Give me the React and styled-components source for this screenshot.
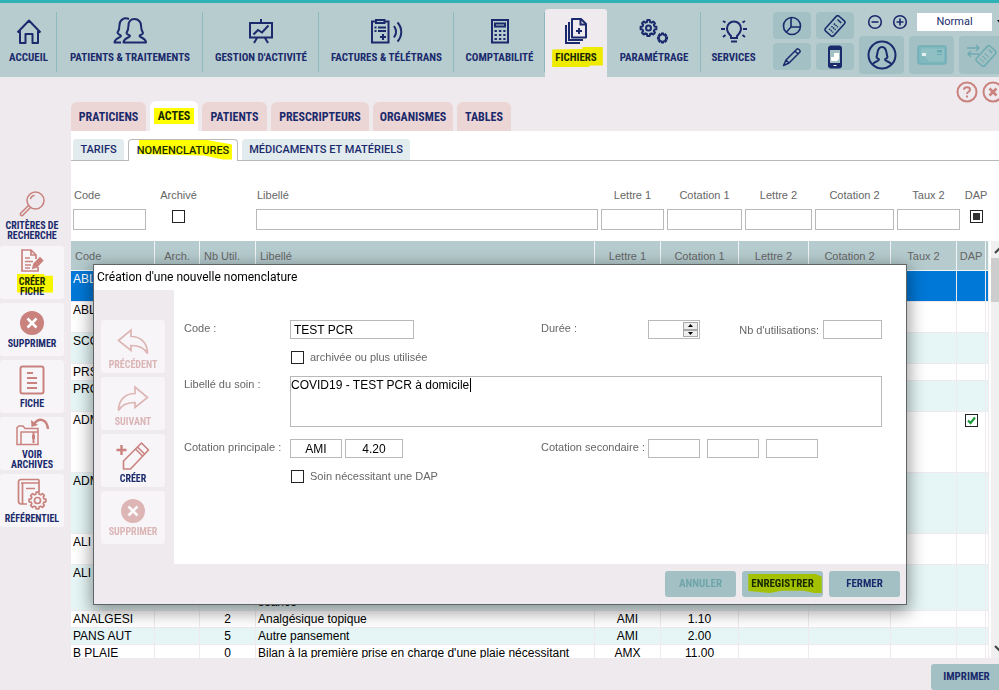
import React, { useState } from "react";
import styled, { createGlobalStyle } from "styled-components";

const narrow = `"Roboto Condensed", "Liberation Sans Narrow", Roboto, sans-serif`;
const arial = `"Liberation Sans", Arial, sans-serif`;
const navy = "#1a2a6c";
const coral = "#c9827e";

const GlobalStyle = createGlobalStyle`
  * {
    box-sizing: border-box;
  }
  body {
    margin: 0;
    overflow: hidden;
    background: #eeeaed;
    font-family: ${arial};
    font-size: 12px;
    color: #000;
  }
  button, input, select, textarea {
    font-family: inherit;
    font-size: inherit;
  }
`;

const Page = styled.div`
  height: 100vh;
  display: flex;
  flex-direction: column;
`;

const Header = styled.header`
  display: flex;
  height: 77px;
  flex-shrink: 0;
  border-top: 3px solid #2fb1b8;
  background: #b7cccf;
  overflow: hidden;
`;

const NavItem = styled.a`
  position: relative;
  flex: 0 0 ${(p) => p.$width}px;
  display: flex;
  flex-direction: column;
  align-items: center;
  gap: 6px;
  margin-top: ${(p) => (p.$active ? "6px" : "9px")};
  padding-top: ${(p) => (p.$active ? "8px" : "5px")};
  border-radius: 3px 3px 0 0;
  background: ${(p) => (p.$active ? "#eeeaed" : "none")};
  color: ${navy};
  font: 700 11px/14px ${narrow};
  text-decoration: none;
  white-space: nowrap;

  svg {
    display: block;
    height: 28px;
  }

  &::after {
    content: "";
    display: ${(p) => (p.$line ? "block" : "none")};
    position: absolute;
    top: 0;
    right: 0;
    width: 1px;
    height: 60px;
    background: #8cbabe;
  }
`;

const Marker = styled.span`
  position: relative;

  &::before {
    content: "";
    position: absolute;
    inset: ${(p) => p.$inset || "-2px -5px"};
    background: #ffff00;
    mix-blend-mode: multiply;
    clip-path: ${(p) => p.$shape || "none"};
    z-index: 1;
    pointer-events: none;
  }
`;

const Tools = styled.div`
  display: flex;
  gap: 5px;
  margin-left: 7px;
  padding-top: 9px;
  flex: 1 0 auto;
`;

const ToolGrid = styled.div`
  display: grid;
  grid-template-columns: 38px 38px;
  grid-auto-rows: 27px;
  gap: 4px 5px;
`;

const ToolButton = styled.button`
  display: flex;
  align-items: center;
  justify-content: center;
  width: ${(p) => (p.$large ? "45px" : "38px")};
  height: ${(p) => (p.$large ? "38px" : "27px")};
  flex-shrink: 0;
  padding: 0;
  border: 0;
  border-radius: 4px;
  background: #a3c1c4;
`;

const ToolSide = styled.div`
  display: flex;
  flex-direction: column;
  gap: 5px;
`;

const ZoomRow = styled.div`
  display: flex;
  align-items: center;
  gap: 9px;
  height: 19px;
  padding-left: 8px;
`;

const ZoomButton = styled.button`
  display: flex;
  width: 16px;
  height: 16px;
  padding: 0;
  border: 0;
  background: none;
`;

const SelectWrap = styled.label`
  display: flex;
  align-items: center;
  gap: 5px;
`;

const ZoomSelect = styled.select`
  appearance: none;
  width: 75px;
  height: 18px;
  padding: 0;
  border: 0;
  border-radius: 0;
  background: #fff;
  color: ${navy};
  font-family: Roboto, sans-serif;
  font-size: 11px;
  text-align: center;
  text-align-last: center;
`;

const ToolRow = styled.div`
  display: flex;
  gap: 5px;
`;

const Body = styled.div`
  display: flex;
  flex: 1;
  min-height: 0;
`;

const Sidebar = styled.nav`
  display: flex;
  flex-direction: column;
  gap: 4px;
  width: 71px;
  flex-shrink: 0;
  padding-top: 112px;
`;

const SideButton = styled.button`
  display: flex;
  flex-direction: column;
  align-items: center;
  justify-content: center;
  gap: 4px;
  width: 64px;
  height: 53px;
  padding: 0;
  border: 0;
  border-radius: 3px;
  background: ${(p) => (p.$flat ? "none" : "#f7f5f8")};
  color: ${(p) => (p.disabled ? "#dbb5b6" : navy)};
  font: 700 10px/10px ${narrow};
  white-space: nowrap;

  svg {
    display: block;
    flex-shrink: 0;
    opacity: ${(p) => (p.disabled ? 0.55 : 1)};
  }
`;

const SideLabel = styled.span`
  display: flex;
  flex-direction: column;
  align-items: center;
`;

const Main = styled.main`
  display: flex;
  flex-direction: column;
  flex: 1;
  min-width: 0;
`;

const HelpRow = styled.div`
  display: flex;
  justify-content: flex-end;
  gap: 4px;
  height: 24px;
  padding-top: 4px;
  margin-right: -5px;
`;

const RoundButton = styled.button`
  width: 22px;
  height: 22px;
  padding: 0;
  border: 0;
  background: none;

  svg {
    display: block;
  }
`;

const Tabs = styled.div`
  display: flex;
  align-items: flex-end;
  gap: 4px;
  height: 30px;
`;

const Tab = styled.button`
  width: ${(p) => p.$width}px;
  height: ${(p) => (p.$active ? "30px" : "29px")};
  padding: 0;
  border: 0;
  border-radius: 6px 6px 0 0;
  background: ${(p) => (p.$active ? "#fff" : "#ecd5d5")};
  color: ${navy};
  font: 700 12px/16px ${narrow};
`;

const Panel = styled.section`
  display: flex;
  flex-direction: column;
  flex: 1;
  min-height: 0;
  background: #fff;
`;

const SubTabs = styled.div`
  display: flex;
  align-items: flex-end;
  gap: 4px;
  height: 30px;
  padding-left: 2px;
  border-bottom: 1px solid #b9b9b9;
`;

const SubTab = styled.button`
  width: ${(p) => p.$width}px;
  height: ${(p) => (p.$active ? "22px" : "21px")};
  margin-bottom: ${(p) => (p.$active ? "-1px" : "0")};
  padding: 0;
  border: ${(p) => (p.$active ? "1px solid #b9b9b9" : "0")};
  border-bottom: 0;
  border-radius: 4px 4px 0 0;
  background: ${(p) => (p.$active ? "#fff" : "#e2ebee")};
  color: ${navy};
  font: 500 11px/14px Roboto, sans-serif;
  white-space: nowrap;
`;

const Filters = styled.form`
  display: grid;
  grid-template-columns: 73px 59px 42px 1fr 63px 75px 67px 79px 63px 26px;
  gap: 3px;
  padding: 28px 10px 11px 2px;
  color: #666;
  font-size: 11px;
`;

const Filter = styled.label`
  display: flex;
  flex-direction: column;
  gap: 7px;
  align-items: ${(p) => (p.$left ? "stretch" : "center")};
  grid-column: ${(p) => p.$column || "auto"};
  line-height: 13px;

  span {
    padding-left: ${(p) => (p.$left ? "1px" : "0")};
  }
`;

const Field = styled.input`
  width: ${(p) => (p.$width ? p.$width + "px" : "100%")};
  height: ${(p) => (p.$tall ? "21px" : "19px")};
  padding: 0 3px;
  border: 1px solid #b9b9b9;
  border-radius: 0;
  background: #fff;
  color: #000;
  font-size: 12px;
  text-align: ${(p) => p.$align || "left"};
  outline: none;
`;

const Check = styled.input.attrs({ type: "checkbox" })`
  appearance: none;
  width: 13px;
  height: 13px;
  flex-shrink: 0;
  margin: ${(p) => (p.$filter ? "1px 0 0" : "0")};
  border: 1px solid #222;
  background: ${(p) => (p.$mixed ? "#333" : "#fff")};
  background-clip: content-box;
  padding: 2px;
`;

const TableArea = styled.div`
  display: flex;
  gap: 2px;
  flex: 1;
  min-height: 0;
  overflow: hidden;
`;

const TableClip = styled.div`
  flex: 1;
  min-width: 0;
  overflow: hidden;
`;

const Table = styled.table`
  width: 100%;
  table-layout: fixed;
  border-collapse: separate;
  border-spacing: 0;
`;

const Th = styled.th`
  height: 30px;
  padding: 0 ${(p) => (p.$left ? "4px" : "0")};
  border-right: 1px solid #f2f5f5;
  border-bottom: 1px solid #f2f5f5;
  background: #b5cbce;
  color: #666;
  font-size: 11px;
  font-weight: 400;
  text-align: ${(p) => (p.$left ? "left" : "center")};
  white-space: nowrap;
`;

const Row = styled.tr`
  height: ${(p) => p.$height}px;
  background: ${(p) => p.$color};
  color: ${(p) => (p.$selected ? "#fff" : "#000")};
`;

const Td = styled.td`
  padding: 1px 1px 0 ${(p) => (p.$center ? "1px" : "2px")};
  border-right: 1px solid #eeeaed;
  border-bottom: 1px solid #eeeaed;
  font-size: 12px;
  line-height: 15px;
  text-align: ${(p) => (p.$center ? "center" : "left")};
  vertical-align: ${(p) => (p.$bottom ? "bottom" : "top")};
  white-space: nowrap;

  svg {
    display: block;
    margin: 1px auto 0;
  }
`;

const Scrollbar = styled.div`
  display: flex;
  flex-direction: column;
  justify-content: space-between;
  width: 8px;
  background: #f0f0f0;
`;

const Thumb = styled.div`
  height: 44px;
  margin-bottom: auto;
  background: #cdcdcd;
`;

const Footer = styled.footer`
  display: flex;
  justify-content: flex-end;
  height: 32px;
  padding-top: 6px;
  margin-right: -3px;
`;

const ActionButton = styled.button`
  width: ${(p) => p.$width || 71}px;
  height: 26px;
  padding: 0;
  border: 0;
  border-radius: 3px;
  background: #a3c1c4;
  color: ${(p) => (p.disabled ? "#6fa5aa" : navy)};
  font: 700 11px/14px ${narrow};
`;

const Dialog = styled.div`
  position: fixed;
  top: 264px;
  left: 93px;
  right: 92px;
  display: flex;
  flex-direction: column;
  border: 1px solid #5f6567;
  background: #eeeaed;
  box-shadow: 0 5px 16px 2px rgba(0, 0, 0, 0.4);
`;

const DialogTitle = styled.h1`
  margin: 0;
  padding: 0 3px;
  background: #fff;
  font: 400 12px/25px Roboto, sans-serif;
`;

const DialogBody = styled.div`
  display: flex;
`;

const DialogSide = styled.div`
  display: flex;
  flex-direction: column;
  gap: 4px;
  width: 80px;
  padding: 30px 0 20px 7px;
`;

const DialogForm = styled.form`
  display: grid;
  grid-template-columns: 106px 251px 107px 1fr;
  align-content: start;
  row-gap: 12px;
  flex: 1;
  padding: 30px 24px 0 10px;
  background: #fff;
  color: #666;
  font-size: 11px;
`;

const FormLabel = styled.label`
  padding-top: 2px;
  line-height: 13px;
  white-space: nowrap;
`;

const Cells = styled.div`
  display: flex;
  align-items: center;
  gap: ${(p) => p.$gap || 3}px;
  justify-content: ${(p) => p.$justify || "flex-start"};
`;

const CheckLine = styled.label`
  display: flex;
  align-items: center;
  gap: 6px;
  grid-column: 2 / -1;
  padding-left: 1px;
  line-height: 13px;
`;

const TextBox = styled.div`
  position: relative;
  grid-column: 2 / -1;
  height: 51px;
`;

const TextArea = styled.textarea`
  display: block;
  width: 100%;
  height: 100%;
  padding: 1px 0;
  border: 1px solid #b9b9b9;
  border-radius: 0;
  color: #000;
  font-size: 12px;
  line-height: 15px;
  resize: none;
  outline: none;
`;

const Caret = styled.i`
  position: absolute;
  top: 2px;
  left: 180px;
  width: 1px;
  height: 14px;
  background: #000;
`;

const Spinner = styled.div`
  display: flex;
  width: 52px;
  height: 19px;
  padding: 1px;
  border: 1px solid #b9b9b9;

  input {
    flex: 1;
    min-width: 0;
    height: auto;
    border: 0;
  }
`;

const SpinButtons = styled.div`
  display: flex;
  flex-direction: column;
  width: 15px;
`;

const SpinButton = styled.button`
  display: flex;
  align-items: center;
  justify-content: center;
  flex: 1;
  min-height: 0;
  padding: 0;
  border: 1px solid #a9a9a9;
  background: #eee;
`;

const DialogFooter = styled.div`
  display: flex;
  justify-content: flex-end;
  gap: 6px;
  padding: 7px 6px;
`;

const Svg = ({ w, h, color = navy, stroke = 2, children }) => (
  <svg width={w} height={h} viewBox={`0 0 ${w} ${h}`} fill="none" stroke={color} strokeWidth={stroke} aria-hidden="true">
    {children}
  </svg>
);

const gearPath = (cx, cy, outer, inner, teeth) => {
  const points = [];
  const step = (Math.PI * 2) / teeth;
  for (let i = 0; i < teeth; i++) {
    [[-0.32, inner], [-0.2, outer], [0.2, outer], [0.32, inner]].forEach(([offset, r]) => {
      const a = (i + offset) * step;
      points.push(`${(cx + r * Math.sin(a)).toFixed(2)} ${(cy - r * Math.cos(a)).toFixed(2)}`);
    });
  }
  return `M${points.join("L")}Z`;
};

const HomeIcon = () => (
  <Svg w={26} h={28}>
    <path d="M1.5 15.5L13 3.5L24.5 15.5M4 14V26H9.5V17H16.5V26H22V14" strokeLinejoin="round" />
  </Svg>
);

const PatientsIcon = () => (
  <Svg w={34} h={28}>
    <path
      strokeLinejoin="round"
      d="M16 2C11 0 6.5 3 6.5 8C6.5 12 6 13.5 4.5 15.5C4.5 17.5 8 17.5 8 19C8 20.5 1.5 21.5 1.5 25.5H8"
    />
    <path
      strokeLinejoin="round"
      d="M21.5 2C17.5 2 15.5 5 15.5 8.5C15.5 12 15 13.5 13.5 16C13.5 18 17 17.5 17 19C17 20.5 10.5 21 10.5 25.5H33C33 21 26.5 20.5 26.5 19C26.5 17.5 30 18 30 16C28.5 13.5 28 12 28 8.5C28 5 25.5 2 21.5 2Z"
    />
  </Svg>
);

const ActivityIcon = () => (
  <Svg w={26} h={28}>
    <path d="M13 2V6M2 6H24V20.5H2ZM9 21L6 26M17 21L20 26" />
    <path d="M5.5 17.5L10 13L14 15.5L20.5 8.5" />
  </Svg>
);

const InvoiceIcon = () => (
  <Svg w={34} h={28}>
    <path d="M6 4.5H2V25.5H18.5V4.5H14.5M6 3H14.5V6H6Z" />
    <path d="M4.5 10.5H6.5M8 10.5H16M4.5 14H6.5M8 14H16M10 20H16M13 17V23" />
    <path d="M24 9C26.5 12.5 26.5 17 24 20.5M27.5 5.5C32.5 11 32.5 19 27.5 24.5" />
  </Svg>
);

const CalculatorIcon = () => (
  <Svg w={20} h={28}>
    <path d="M2 3H18V25.5H2ZM5 6.5H15V9.5H5Z" />
    <path d="M4.5 14H15.5M4.5 18H15.5M4.5 22H15.5" strokeDasharray="2.4 2" />
  </Svg>
);

const FilesIcon = () => (
  <Svg w={24} h={28}>
    <path d="M8 2H17L22 7V20.5H8Z" strokeLinejoin="round" />
    <path d="M16.5 2V7.5H22M12 14H18M15 11V17M5 5V23H19M2 8V26H16" />
  </Svg>
);

const SettingsIcon = () => (
  <Svg w={30} h={28}>
    <path d={gearPath(9.5, 11, 8, 6.2, 8)} strokeLinejoin="round" />
    <circle cx="9.5" cy="11" r="2.5" />
    <path d={gearPath(23.5, 21, 4.8, 3.4, 8)} strokeWidth="1.6" />
  </Svg>
);

const BulbIcon = () => (
  <Svg w={26} h={28}>
    <path d="M10 21V19C8 17 6 15 6 11.5A7 7 0 0 1 20 11.5C20 15 18 17 16 19V21ZM10 24.5H16" />
    <path d="M2 4L4.500 5.500M24 4L21.500 5.500M0 12H4M26 12H22M2 20L4.500 18M24 20L21.500 18" />
  </Svg>
);

const PieIcon = () => (
  <Svg w={20} h={20} stroke={1.6}>
    <circle cx="10" cy="10" r="8.5" />
    <path d="M9 1.5V11H18.5M9 11L4 16.5" />
  </Svg>
);

const CardReader = ({ color }) => (
  <g transform="rotate(42 11 11)" stroke={color}>
    <rect x="5.5" y="1" width="11" height="20" rx="2" />
    <path d="M8.5 4.5H13.5" />
    <path d="M8.5 10H14M8.5 13.5H14M8.500 17H14" strokeDasharray="1.5 0.7" />
  </g>
);

const ReaderIcon = () => (
  <Svg w={22} h={22} stroke={1.5}>
    <CardReader color={navy} />
  </Svg>
);

const PencilIcon = () => (
  <Svg w={20} h={20} stroke={1.5}>
    <path d="M1.5 18.5L4 13L15 2C16 1 19 4 18 5L7 16ZM4 13L7 16M13 4L16 7" strokeLinejoin="round" />
  </Svg>
);

const PhoneIcon = () => (
  <Svg w={16} h={24} stroke={1}>
    <rect x="1.5" y="1" width="13" height="22" rx="2" fill={navy} />
    <path d="M3 5H13V18H3Z" fill="#a3c1c4" stroke="none" />
    <path d="M4 12H7V8H12V14L10 16H4Z" fill="#fff" stroke="none" />
    <path d="M6.5 20.5H9.5" stroke="#fff" />
  </Svg>
);

const ZoomIcon = ({ plus }) => (
  <Svg w={16} h={16} stroke={1.6}>
    <circle cx="8" cy="8" r="6.3" />
    <path d={plus ? "M4.5 8H11.5M8 4.5V11.5" : "M4.5 8H11.5"} />
  </Svg>
);

const UserIcon = () => (
  <Svg w={30} h={30}>
    <circle cx="15" cy="15" r="13.5" />
    <path
      strokeLinejoin="round"
      d="M6 24C7 21.5 12 21.5 12 19.5C12 18.5 9.5 18.5 9.5 17C11 14 9.5 7 15 7C20.5 7 19 14 20.5 17C20.5 18.5 18 18.5 18 19.5C18 21.5 23 21.5 24 24"
    />
  </Svg>
);

const VitaleIcon = () => (
  <Svg w={30} h={20} stroke={1.6} color="#72b0b7">
    <rect x="1" y="1" width="28" height="18" rx="2" fill="#7fb8be" />
    <path d="M4 3.5H27V16.5H12L8 12L4 11Z" fill="#90bfc4" stroke="none" />
    <path d="M20 5H25V7.500H20ZM20 9H25V10H20Z" fill="#6aabb3" stroke="none" />
    <path d="M5 8H9V11H5Z" fill="#e4f0f1" stroke="none" />
  </Svg>
);

const TransferIcon = () => (
  <Svg w={32} h={24} stroke={1.5} color="#6fabb2">
    <path d="M1 5H13M10 2L13 5L10 8M13 11H2M5 8L2 11L5 14" />
    <g transform="translate(9 2)">
      <CardReader color="#6fabb2" />
    </g>
  </Svg>
);

const HelpIcon = () => (
  <Svg w={22} h={22} color={coral}>
    <circle cx="11" cy="11" r="9.5" />
    <path d="M8 8.7C8 5.5 14 5.5 14 8.7C14 11 11 10.5 11 13M11 14.5V16.5" />
  </Svg>
);

const CloseIcon = () => (
  <Svg w={22} h={22} color={coral}>
    <circle cx="11" cy="11" r="9.5" />
    <path d="M7.5 7.5L14.5 14.5M14.5 7.5L7.5 14.5" strokeWidth="2.6" />
  </Svg>
);

const SearchIcon = () => (
  <Svg w={26} h={26} color={coral} stroke={1.5}>
    <circle cx="16.5" cy="9.5" r="8.5" />
    <path d="M10 14L1.500 22.500C1 24 2 25 3.500 24.500L12 16M11.500 8C12 6 13.500 4.500 15.500 4.500" />
  </Svg>
);

const CreateIcon = () => (
  <Svg w={24} h={24} color={coral} stroke={1.7}>
    <path d="M16 10V6L11 1H2V22H18V18M11 1V6H16M5 9H10M5 12.5H13M5 16H11M5 19H10" />
    <path d="M13 19L14 15L20 9L22.5 11.5L16.5 18Z" fill={coral} />
  </Svg>
);

const DeleteIcon = () => (
  <Svg w={24} h={24} color="#fff" stroke={2.6}>
    <circle cx="12" cy="12" r="12" fill={coral} stroke="none" />
    <path d="M7.5 7.5L16.5 16.5M16.5 7.5L7.5 16.5" />
  </Svg>
);

const SheetIcon = () => (
  <Svg w={26} h={30} color={coral}>
    <rect x="1.5" y="1.5" width="23" height="27" rx="2" />
    <path d="M8 8H14M8 13H18M8 18H18M8 23H18" />
  </Svg>
);

const ArchiveIcon = () => (
  <Svg w={36} h={28} color={coral} stroke={1.5}>
    <path d="M3 26.5V9.5L5 8H9L11 10.5H24V26.5ZM7 26V14H24" />
    <path d="M19.5 14V17M18 18H21M18 20H21M19.5 21V25" strokeWidth="2" />
    <path d="M34 11C33 1 25 -1 20 6" strokeWidth="2.5" />
    <path d="M17 2L17.5 9L24 7Z" fill={coral} stroke="none" />
  </Svg>
);

const ReferenceIcon = () => (
  <Svg w={30} h={32} color={coral} stroke={1.7}>
    <path d="M10 26H4C2 26 1.5 24.5 1.5 23V4C1.5 2 3 1.5 4 1.5H22M4 5H22V14M22 1.5V5M5.5 5V26M9 10.5H18" />
    <path d={gearPath(20.5, 22.5, 8.5, 6.6, 8)} strokeLinejoin="round" />
    <circle cx="20.5" cy="22.5" r="3" />
  </Svg>
);

const ArrowIcon = ({ forward }) => (
  <Svg w={32} h={32} color={coral} stroke={1.7}>
    <g transform={forward ? "translate(32 4) scale(-1 1)" : "translate(0 4)"}>
      <path d="M1.5 12.5L14 2V8.5C24 8.5 30.5 15 30.5 25.5C27 19 21 17.5 14 17.5V22.5Z" />
    </g>
  </Svg>
);

const AddPencilIcon = () => (
  <Svg w={36} h={32} color={coral} stroke={1.6}>
    <g transform="translate(0 3)">
      <path d="M1.5 9H11.5M6.5 4V14" strokeWidth="2.4" />
      <path d="M8.5 28V20L26.5 2L33.5 9L15.5 28ZM20.5 8L27.5 15M22.5 6L29.5 13" strokeLinejoin="round" />
    </g>
  </Svg>
);

const TickIcon = () => (
  <svg width="13" height="13" viewBox="0 0 13 13" fill="none" role="img" aria-label="DAP">
    <rect x="0.5" y="0.5" width="12" height="12" fill="#fff" stroke="#222" />
    <path d="M3 6.500L5.500 9L10 3.500" stroke="#1d9a3c" strokeWidth="2.2" />
  </svg>
);

const Triangle = ({ down }) => (
  <svg width="5" height="3" viewBox="0 0 5 3" aria-hidden="true">
    <path d={down ? "M0 0H5L2.5 3Z" : "M0 3H5L2.5 0Z"} />
  </svg>
);

const Chevron = ({ down }) => (
  <svg width="8" height="17" viewBox="0 0 8 17" fill="none" stroke="#444" strokeWidth="2" aria-hidden="true">
    <path d={down ? "M4 5L9 10" : "M4 12L9 7"} />
  </svg>
);

const navItems = [
  { label: "ACCUEIL", icon: <HomeIcon />, width: 57, line: true },
  { label: "PATIENTS & TRAITEMENTS", icon: <PatientsIcon />, width: 146, line: true },
  { label: "GESTION D'ACTIVITÉ", icon: <ActivityIcon />, width: 116, line: true },
  { label: "FACTURES & TÉLÉTRANS", icon: <InvoiceIcon />, width: 135, line: true },
  { label: "COMPTABILITÉ", icon: <CalculatorIcon />, width: 91, line: true },
  { label: "FICHIERS", icon: <FilesIcon />, width: 62, active: true },
  { label: "PARAMÉTRAGE", icon: <SettingsIcon />, width: 94, line: true },
  { label: "SERVICES", icon: <BulbIcon />, width: 65 },
];

const tabs = [
  ["PRATICIENS", 75],
  ["ACTES", 48],
  ["PATIENTS", 65],
  ["PRESCRIPTEURS", 98],
  ["ORGANISMES", 80],
  ["TABLES", 54],
];

const sideItems = [
  { lines: ["CRITÈRES DE", "RECHERCHE"], icon: <SearchIcon />, flat: true },
  { lines: ["CRÉER", "FICHE"], icon: <CreateIcon />, marked: true },
  { lines: ["SUPPRIMER"], icon: <DeleteIcon /> },
  { lines: ["FICHE"], icon: <SheetIcon /> },
  { lines: ["VOIR", "ARCHIVES"], icon: <ArchiveIcon /> },
  { lines: ["RÉFÉRENTIEL"], icon: <ReferenceIcon /> },
];

const columns = [
  ["Code", 84],
  ["Arch.", 45],
  ["Nb Util.", 56],
  ["Libellé", null],
  ["Lettre 1", 66],
  ["Cotation 1", 78],
  ["Lettre 2", 70],
  ["Cotation 2", 82],
  ["Taux 2", 66],
  ["DAP", 29],
  ["", 3],
];

const rows = [
  { code: "ABL", height: 31, selected: true },
  { code: "ABL", height: 31 },
  { code: "SCO", height: 31, tinted: true },
  { code: "PRS", height: 17 },
  { code: "PRO", height: 31, tinted: true },
  { code: "ADM", height: 61, dap: true },
  { code: "ADM", height: 61, tinted: true },
  { code: "ALI", height: 31 },
  { code: "ALI", height: 46, tinted: true, label: "séance", bottom: true },
  { code: "ANALGESI", height: 17, count: 2, label: "Analgésique topique", letter: "AMI", rate: "1.10" },
  { code: "PANS AUT", height: 17, tinted: true, count: 5, label: "Autre pansement", letter: "AMI", rate: "2.00" },
  {
    code: "B PLAIE",
    height: 17,
    count: 0,
    label: "Bilan à la première prise en charge d'une plaie nécessitant",
    letter: "AMX",
    rate: "11.00",
  },
];

const rowColor = (row) => {
  if (row.selected) return "#0078d7";
  return row.tinted ? "#e6f6f6" : "#fff";
};

function TopBar() {
  return (
    <Header>
      {navItems.map((item) => (
        <NavItem key={item.label} href="#" $width={item.width} $active={item.active} $line={item.line}>
          {item.icon}
          {item.active ? (
            <Marker $inset="-4px -6px -2px -3px" $shape="polygon(0 12%, 60% 10%, 60% 0, 100% 0, 100% 92%, 75% 92%, 72% 100%, 0 100%)">
              {item.label}
            </Marker>
          ) : (
            <span>{item.label}</span>
          )}
        </NavItem>
      ))}
      <Tools>
        <ToolGrid>
          <ToolButton aria-label="Statistiques"><PieIcon /></ToolButton>
          <ToolButton aria-label="Lecteur"><ReaderIcon /></ToolButton>
          <ToolButton aria-label="Modifier"><PencilIcon /></ToolButton>
          <ToolButton aria-label="Mobile"><PhoneIcon /></ToolButton>
        </ToolGrid>
        <ToolSide>
          <ZoomRow>
            <ZoomButton aria-label="Réduire"><ZoomIcon /></ZoomButton>
            <ZoomButton aria-label="Agrandir"><ZoomIcon plus /></ZoomButton>
            <SelectWrap>
              <ZoomSelect aria-label="Affichage">
                <option>Normal</option>
              </ZoomSelect>
              <Triangle down />
            </SelectWrap>
          </ZoomRow>
          <ToolRow>
            <ToolButton $large aria-label="Utilisateur"><UserIcon /></ToolButton>
            <ToolButton $large aria-label="Carte"><VitaleIcon /></ToolButton>
            <ToolButton $large aria-label="Transfert"><TransferIcon /></ToolButton>
          </ToolRow>
        </ToolSide>
      </Tools>
    </Header>
  );
}

function FilterBar() {
  return (
    <Filters>
      <Filter $left><span>Code</span><Field $tall /></Filter>
      <Filter><span>Archivé</span><Check $filter /></Filter>
      <Filter $left $column="4"><span>Libellé</span><Field $tall /></Filter>
      <Filter><span>Lettre 1</span><Field $tall /></Filter>
      <Filter><span>Cotation 1</span><Field $tall /></Filter>
      <Filter><span>Lettre 2</span><Field $tall /></Filter>
      <Filter><span>Cotation 2</span><Field $tall /></Filter>
      <Filter><span>Taux 2</span><Field $tall /></Filter>
      <Filter><span>DAP</span><Check $filter $mixed /></Filter>
    </Filters>
  );
}

function Grid() {
  return (
    <TableArea>
      <TableClip>
        <Table>
          <colgroup>
            {columns.map(([name, width]) => (
              <col key={name} width={width || undefined} />
            ))}
          </colgroup>
          <thead>
            <tr>
              {columns.map(([name]) => (
                <Th key={name} $left={name === "Code" || name === "Libellé" || name === "Nb Util."}>{name}</Th>
              ))}
            </tr>
          </thead>
          <tbody>
            {rows.map((row, i) => (
              <Row key={i} $height={row.height} $selected={row.selected} $color={rowColor(row)}>
                <Td>{row.code}</Td>
                <Td />
                <Td $center>{row.count}</Td>
                <Td $bottom={row.bottom}>{row.label}</Td>
                <Td $center>{row.letter}</Td>
                <Td $center>{row.rate}</Td>
                <Td />
                <Td />
                <Td />
                <Td>{row.dap && <TickIcon />}</Td>
                <Td />
              </Row>
            ))}
          </tbody>
        </Table>
      </TableClip>
      <Scrollbar>
        <Chevron />
        <Thumb />
        <Chevron down />
      </Scrollbar>
    </TableArea>
  );
}

function NomenclatureDialog() {
  const [code, setCode] = useState("TEST PCR");
  const [text, setText] = useState("COVID19 - TEST PCR à domicile");

  return (
    <Dialog role="dialog" aria-labelledby="dialog-title">
      <DialogTitle id="dialog-title">Création d'une nouvelle nomenclature</DialogTitle>
      <DialogBody>
        <DialogSide>
          <SideButton disabled><ArrowIcon /><SideLabel>PRÉCÉDENT</SideLabel></SideButton>
          <SideButton disabled><ArrowIcon forward /><SideLabel>SUIVANT</SideLabel></SideButton>
          <SideButton><AddPencilIcon /><SideLabel>CRÉER</SideLabel></SideButton>
          <SideButton disabled><DeleteIcon /><SideLabel>SUPPRIMER</SideLabel></SideButton>
        </DialogSide>
        <DialogForm>
          <FormLabel htmlFor="code">Code :</FormLabel>
          <Cells>
            <Field id="code" $width={124} value={code} onChange={(e) => setCode(e.target.value)} />
          </Cells>
          <FormLabel htmlFor="duree">Durée :</FormLabel>
          <Cells $justify="space-between">
            <Spinner>
              <Field id="duree" />
              <SpinButtons>
                <SpinButton type="button" aria-label="Plus"><Triangle /></SpinButton>
                <SpinButton type="button" aria-label="Moins"><Triangle down /></SpinButton>
              </SpinButtons>
            </Spinner>
            <Cells $gap={4}>
              <FormLabel htmlFor="usages">Nb d'utilisations:</FormLabel>
              <Field id="usages" $width={59} />
            </Cells>
          </Cells>
          <CheckLine><Check />archivée ou plus utilisée</CheckLine>
          <FormLabel htmlFor="libelle">Libellé du soin :</FormLabel>
          <TextBox>
            <TextArea id="libelle" value={text} onChange={(e) => setText(e.target.value)} />
            <Caret />
          </TextBox>
          <FormLabel htmlFor="lettre">Cotation principale :</FormLabel>
          <Cells>
            <Field id="lettre" $width={52} $align="center" defaultValue="AMI" />
            <Field aria-label="Coefficient" $width={58} $align="center" defaultValue="4.20" />
          </Cells>
          <FormLabel htmlFor="secondaire">Cotation secondaire :</FormLabel>
          <Cells $gap={7}>
            <Field id="secondaire" $width={52} />
            <Field aria-label="Coefficient secondaire" $width={52} />
            <Field aria-label="Taux secondaire" $width={52} />
          </Cells>
          <CheckLine><Check />Soin nécessitant une DAP</CheckLine>
        </DialogForm>
      </DialogBody>
      <DialogFooter>
        <ActionButton disabled>ANNULER</ActionButton>
        <ActionButton $width={81}>
          <Marker $inset="-3px -8px -3px -3px" $shape="polygon(0 0, 92% 0, 100% 15%, 100% 100%, 90% 100%, 75% 88%, 45% 88%, 30% 100%, 0 90%)">
            ENREGISTRER
          </Marker>
        </ActionButton>
        <ActionButton>FERMER</ActionButton>
      </DialogFooter>
    </Dialog>
  );
}

export default function App() {
  return (
    <Page>
      <GlobalStyle />
      <TopBar />
      <Body>
        <Sidebar>
          {sideItems.map((item) => (
            <SideButton key={item.lines.join(" ")} $flat={item.flat}>
              {item.icon}
              {item.marked ? (
                <Marker $inset="-3px -8px 4px -2px" $shape="polygon(0 0, 75% 0, 75% 12%, 100% 12%, 100% 100%, 0 100%)">
                  <SideLabel>{item.lines.map((line) => <span key={line}>{line}</span>)}</SideLabel>
                </Marker>
              ) : (
                <SideLabel>{item.lines.map((line) => <span key={line}>{line}</span>)}</SideLabel>
              )}
            </SideButton>
          ))}
        </Sidebar>
        <Main>
          <HelpRow>
            <RoundButton aria-label="Aide"><HelpIcon /></RoundButton>
            <RoundButton aria-label="Fermer"><CloseIcon /></RoundButton>
          </HelpRow>
          <Tabs>
            {tabs.map(([label, width]) => (
              <Tab key={label} $width={width} $active={label === "ACTES"}>
                {label === "ACTES" ? <Marker $inset="-1px -4px">{label}</Marker> : label}
              </Tab>
            ))}
          </Tabs>
          <Panel>
            <SubTabs>
              <SubTab $width={51}>TARIFS</SubTab>
              <SubTab $width={110} $active>
                <Marker $inset="-4px -3px -3px 2px" $shape="polygon(0 0, 70% 0, 100% 25%, 100% 100%, 90% 100%, 70% 80%, 0 72%)">
                  NOMENCLATURES
                </Marker>
              </SubTab>
              <SubTab $width={168}>MÉDICAMENTS ET MATÉRIELS</SubTab>
            </SubTabs>
            <FilterBar />
            <Grid />
          </Panel>
          <Footer>
            <ActionButton>IMPRIMER</ActionButton>
          </Footer>
        </Main>
      </Body>
      <NomenclatureDialog />
    </Page>
  );
}
